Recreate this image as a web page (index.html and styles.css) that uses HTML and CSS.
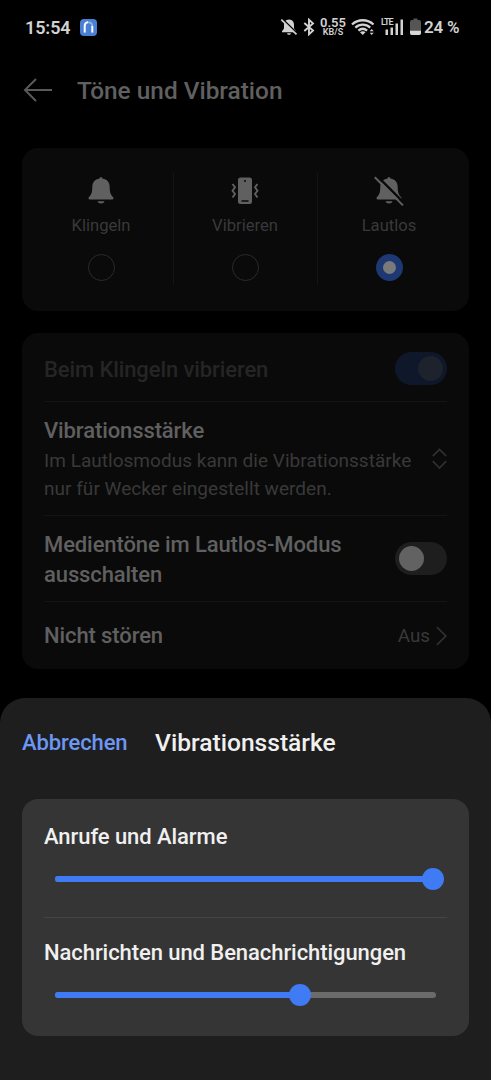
FILE: index.html
```
<!DOCTYPE html>
<html lang="de">
<head>
    <meta charset="UTF-8">
    <meta name="viewport" content="width=device-width, initial-scale=1.0">
    <title>Töne und Vibration</title>
    <link rel="stylesheet" href="styles.css">
</head>
<body>
    <div class="status-bar">
        <span class="time">15:54</span>
        <svg class="app-badge" width="17" height="17" viewBox="0 0 17 17">
            <rect width="17" height="17" rx="4" fill="#4a7fd4"/>
            <path d="M4.7 13.5V7.2C4.7 2 12.3 2 12.3 7.2v6.3" fill="none" stroke="#8fb4ee" stroke-width="1.8"/>
            <path d="M4.7 13.5V6.8C4.7 4.6 6 3.5 8 3.2M12.3 7v6.5" fill="none" stroke="#fff" stroke-width="1.8"/>
        </svg>
        <div class="status-icons">
            <svg class="i-mute" width="18" height="18" viewBox="0 0 18 18">
                <path d="M9 1.500c-3.500.3-5 2.500-5 5.300v3.700L2 13.300v1h14v-1l-2-2.800V6.800c0-2.800-1.500-5-5-5.300zM7 15.200h4c-.6 2-3.400 2-4 0z" fill="#d2d2d2"/>
                <path d="M2.200 1 17.400 15.700" stroke="#000" stroke-width="2"/>
                <path d="M1.300 1.700 16.500 16.400" stroke="#d2d2d2" stroke-width="1.700"/>
            </svg>
            <svg class="i-bt" width="12" height="18" viewBox="0 0 12 18">
                <path d="M1.300 5 10 12.600 6 16.300V1.700l4 3.700L1.300 13" fill="none" stroke="#d2d2d2" stroke-width="1.900"/>
            </svg>
            <div class="speed"><b>0.55</b><small>KB/S</small></div>
            <svg class="i-wifi" width="24" height="18" viewBox="0 0 24 18">
                <g fill="none" stroke="#d2d2d2" stroke-width="2.300">
                    <path d="M1 6.500C7 .8 16.500.8 22.500 6.500"/>
                    <path d="M4.300 9.700c4.300-4 10.600-4 14.900 0"/>
                    <path d="M7.400 12.700c2.600-2.300 6.100-2.300 8.700 0"/>
                </g>
                <path d="M9 14.200c1.500-1.300 4-1.300 5.500 0L11.800 17z" fill="#d2d2d2"/>
                <path d="M18.700 13.200 20.700 11l2 2.200zM18.700 14.700h4l-2 2.200z" fill="#d2d2d2"/>
            </svg>
            <div class="signal">
                <span class="lte">LTE</span>
                <svg width="23" height="18" viewBox="0 0 23 18">
                    <path d="M4.500 11.500H7V17H4.500zM9.500 9.500H12V17H9.500zM14.500 5.500H17V17h-2.500zM19.500 1.500H22V17h-2.500z" fill="#d2d2d2"/>
                </svg>
            </div>
            <svg class="i-batt" width="11" height="18" viewBox="0 0 11 18">
                <path d="M3.500.5h4v1.500H9a2 2 0 0 1 2 2V15a2 2 0 0 1-2 2H2a2 2 0 0 1-2-2V4a2 2 0 0 1 2-2h1.500z" fill="#555"/>
                <path d="M0 12.700h11V15a2 2 0 0 1-2 2H2a2 2 0 0 1-2-2z" fill="#d8d8d8"/>
            </svg>
            <span class="percent">24 %</span>
        </div>
    </div>

    <div class="header">
        <svg width="30" height="26" viewBox="0 0 30 26">
            <path d="M13 2 2 13l11 11M2 13h27" fill="none" stroke="#595959" stroke-width="2"/>
        </svg>
        <h1>Töne und Vibration</h1>
    </div>

    <div class="card modes">
        <div class="mode">
            <svg width="32" height="32" viewBox="0 0 32 32">
                <path d="M16 2.300c.8 0 1.400.5 1.500 1.200 4.600.7 7.200 4 7.200 8.300 0 5.800 1 8 3.300 10.300.8.900.7 2.300-.5 2.300h-23c-1.200 0-1.300-1.400-.5-2.300 2.300-2.300 3.300-4.500 3.300-10.300 0-4.300 2.600-7.600 7.200-8.300.1-.7.700-1.200 1.500-1.200zM12.500 26.200h7c-.8 3-6.200 3-7 0z" fill="#606060"/>
            </svg>
            <span>Klingeln</span>
            <i class="radio"></i>
        </div>
        <div class="mode">
            <svg width="32" height="32" viewBox="0 0 32 32">
                <rect x="9" y="2.500" width="14" height="26.500" rx="2.500" fill="#606060"/>
                <circle cx="16" cy="6" r="1" fill="#0a0a0a"/>
                <path d="M12.500 26h7" stroke="#0a0a0a" stroke-width="1.500"/>
                <path d="M3.500 9 6 12.300 3.500 15.700 6 19l-2.500 3.500M28.500 9 26 12.300l2.500 3.400L26 19l2.500 3.500" fill="none" stroke="#606060" stroke-width="1.900"/>
            </svg>
            <span>Vibrieren</span>
            <i class="radio"></i>
        </div>
        <div class="mode">
            <svg width="32" height="32" viewBox="0 0 32 32">
                <path d="M16 2.300c.8 0 1.400.5 1.500 1.200 4.600.7 7.200 4 7.200 8.300 0 5.800 1 8 3.300 10.300.8.900.7 2.300-.5 2.300h-23c-1.200 0-1.300-1.400-.5-2.300 2.300-2.300 3.300-4.500 3.300-10.300 0-4.300 2.600-7.600 7.200-8.300.1-.7.700-1.200 1.500-1.200zM12.500 26.200h7c-.8 3-6.200 3-7 0z" fill="#606060"/>
                <path d="M3.500.4 31.800 28.700" stroke="#0a0a0a" stroke-width="2.500"/>
                <path d="M1.800 2.200 30 30.400" stroke="#606060" stroke-width="2"/>
            </svg>
            <span>Lautlos</span>
            <i class="radio checked"></i>
        </div>
    </div>

    <div class="card settings">
        <div class="row ring disabled">
            <div class="title">Beim Klingeln vibrieren</div>
            <div class="switch on"></div>
        </div>
        <div class="row strength">
            <div>
                <div class="title">Vibrationsstärke</div>
                <div class="desc">Im Lautlosmodus kann die Vibrationsstärke<br>nur für Wecker eingestellt werden.</div>
            </div>
            <svg width="16" height="22" viewBox="0 0 16 22">
                <path d="M1.800 8.200 8.500 1.400l6.700 6.800M1.800 13.200 8.500 20l6.700-6.800" fill="none" stroke="#303030" stroke-width="1.700"/>
            </svg>
        </div>
        <div class="row media">
            <div class="title">Medientöne im Lautlos-Modus<br>ausschalten</div>
            <div class="switch"></div>
        </div>
        <div class="row dnd">
            <div class="title">Nicht stören</div>
            <div class="value">
                <span>Aus</span>
                <svg width="11" height="20" viewBox="0 0 11 20">
                    <path d="M1 1.200 9.800 10 1 18.800" fill="none" stroke="#353535" stroke-width="1.600"/>
                </svg>
            </div>
        </div>
    </div>

    <div class="sheet">
        <div class="sheet-header">
            <span class="cancel">Abbrechen</span>
            <h2>Vibrationsstärke</h2>
        </div>
        <div class="sheet-card">
            <div class="slider-row">
                <div class="label">Anrufe und Alarme</div>
                <div class="slider"><div class="fill" style="width: 99.3%"></div></div>
            </div>
            <div class="slider-row">
                <div class="label">Nachrichten und Benachrichtigungen</div>
                <div class="slider"><div class="fill" style="width: 64.4%"></div></div>
            </div>
        </div>
    </div>
</body>
</html>
```
FILE: styles.css
```
* {
    box-sizing: border-box;
}

body {
    font-family: Roboto, "Noto Sans", sans-serif;
    margin: 0;
    height: 1080px;
    display: flex;
    flex-direction: column;
    background: #000;
    color: #606060;
    overflow: hidden;
}

svg {
    display: block;
    flex: none;
}

h1, h2 {
    margin: 0;
    font-size: 24.6px;
    font-weight: 500;
    line-height: 30px;
    white-space: nowrap;
}

h1 {
    padding-top: 2px;
    font-size: 24.4px;
}

/* status bar */
.status-bar {
    display: flex;
    align-items: center;
    height: 54px;
    padding: 0 31px 0 25px;
    color: #d2d2d2;
}

.time {
    width: 55px;
    font-size: 18px;
    font-weight: 600;
    letter-spacing: -0.1px;
}

.status-icons {
    display: flex;
    align-items: center;
    margin-left: auto;
}

.i-bt {
    margin-left: 5px;
}

.speed {
    display: flex;
    flex-direction: column;
    align-items: center;
    width: 28px;
    margin-left: 4px;
}

.speed b {
    font-size: 13px;
    line-height: 11px;
    font-weight: 600;
}

.speed small {
    font-size: 9px;
    line-height: 9px;
    font-weight: 600;
}

.i-wifi {
    margin-left: 4px;
}

.signal {
    position: relative;
    margin-left: 6px;
}

.lte {
    position: absolute;
    top: 0;
    left: 0;
    font-size: 9px;
    line-height: 9px;
    font-weight: 600;
    letter-spacing: -0.9px;
}

.i-batt {
    margin-left: 6px;
}

.percent {
    width: 36px;
    margin-left: 3px;
    font-size: 17px;
    font-weight: 600;
    letter-spacing: -0.2px;
    white-space: nowrap;
}

.header {
    display: flex;
    align-items: center;
    gap: 24px;
    height: 72px;
    margin-bottom: 1px;
    padding-left: 23px;
}

/* cards behind the sheet */
.card {
    margin: 0 22px;
    background: #0a0a0a;
    border-radius: 16px;
}

.modes {
    display: grid;
    grid-template-columns: repeat(3, 144px);
    height: 163px;
    margin-top: 21px;
    padding: 25px 8px 26px 7px;
}

.mode {
    display: flex;
    flex-direction: column;
    align-items: center;
    color: #393939;
    font-size: 16.6px;
    line-height: 22px;
}

.mode + .mode {
    padding-right: 1px;
    border-left: 1px solid #141414;
}

.mode svg {
    margin-top: 2px;
}

.mode span {
    margin-top: 8px;
}

.radio {
    width: 27px;
    height: 27px;
    margin-top: 17px;
    border: 1.5px solid #2b2b2b;
    border-radius: 50%;
}

.radio.checked {
    border: 7.5px solid #1d3872;
    background: #7a7a7a;
}

.settings {
    height: 336px;
    margin-top: 22px;
    padding: 0 22px;
}

.row {
    display: flex;
    align-items: center;
    justify-content: space-between;
}

.row + .row {
    border-top: 1px solid #141414;
}

.title {
    font-size: 22px;
    line-height: 30px;
    font-weight: 500;
    letter-spacing: -0.1px;
    white-space: nowrap;
}

.desc {
    padding-top: 1px;
    font-size: 19px;
    line-height: 28px;
    letter-spacing: 0.03px;
    color: #393939;
    white-space: nowrap;
}

.ring {
    height: 68px;
    padding-top: 3px;
}

.ring .title {
    padding-top: 2px;
}

.strength {
    height: 114px;
    padding-top: 1px;
}

.media {
    height: 86px;
}

.media .title {
    padding-top: 2px;
}

.dnd {
    height: 68px;
}

.disabled .title {
    color: #252525;
}

.switch {
    width: 52px;
    height: 33px;
    padding: 4px;
    border-radius: 17px;
    background: #1e1e1e;
}

.switch::before {
    content: "";
    display: block;
    width: 25px;
    height: 25px;
    border-radius: 50%;
    background: #626262;
}

.switch.on {
    background: #0f182b;
}

.switch.on::before {
    margin-left: 19px;
    background: #1d222c;
}

.value {
    display: flex;
    align-items: center;
    gap: 6px;
    color: #393939;
    font-size: 18.8px;
}

/* bottom sheet */
.sheet {
    flex: 1;
    margin-top: 29px;
    padding: 0 22px;
    background: #1e1e1e;
    border-radius: 25px 25px 0 0;
}

.sheet-header {
    display: flex;
    align-items: center;
    height: 101px;
    padding-bottom: 12px;
}

.cancel {
    width: 133px;
    color: #6c97f3;
    font-size: 22px;
    line-height: 30px;
    font-weight: 500;
    letter-spacing: -0.1px;
}

.sheet-header h2 {
    color: #f0f0f0;
}

.sheet-card {
    height: 237px;
    padding: 0 22px;
    background: #353535;
    border-radius: 16px;
}

.slider-row {
    height: 118px;
    padding: 23px 11px 0 0;
}

.slider-row + .slider-row {
    padding-top: 20px;
    border-top: 1px solid #444;
}

.label {
    color: #f0f0f0;
    font-size: 22px;
    line-height: 30px;
    font-weight: 500;
    letter-spacing: -0.07px;
    white-space: nowrap;
}

.slider {
    height: 6px;
    margin: 24px 0 0 11px;
    border-radius: 3px;
    background: #6b6b6b;
}

.fill {
    display: flex;
    align-items: center;
    justify-content: flex-end;
    height: 6px;
    border-radius: 3px;
    background: #3f7bf4;
}

.fill::after {
    content: "";
    flex: none;
    width: 22px;
    height: 22px;
    margin-right: -11px;
    border-radius: 50%;
    background: #3f7bf4;
}
```
